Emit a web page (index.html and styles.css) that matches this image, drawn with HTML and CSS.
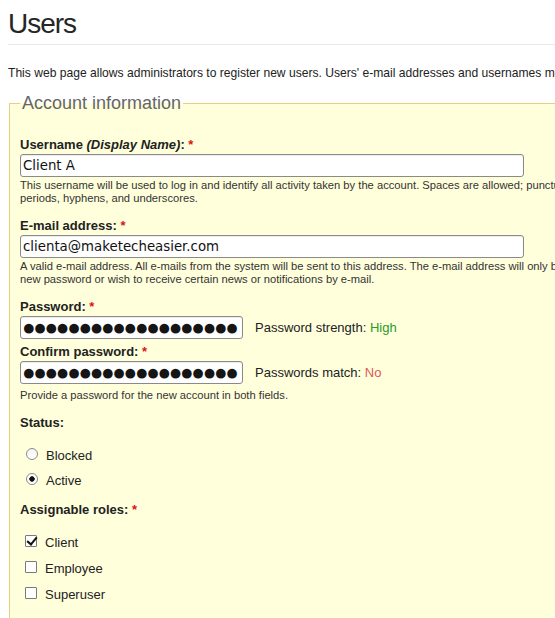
FILE: index.html
```html
<!DOCTYPE html>
<html lang="en">
<head>
<meta charset="utf-8">
<title>Users</title>
<link rel="stylesheet" href="styles.css">
</head>
<body>
<div class="page">
  <h1 class="title">Users</h1>
  <p class="intro">This web page allows administrators to register new users. Users' e-mail addresses and usernames must be unique.</p>
  <form class="form">
    <fieldset class="group">
      <legend class="legend">Account information</legend>

      <div class="item item-first">
        <label class="lbl" for="edit-name">Username <em>(Display Name)</em>: <span class="req">*</span></label>
        <input class="text wide" id="edit-name" type="text" value="Client A">
        <div class="desc">This username will be used to log in and identify all activity taken by the account. Spaces are allowed; punctuation is not allowed except for<br>periods, hyphens, and underscores.</div>
      </div>

      <div class="item">
        <label class="lbl" for="edit-mail">E-mail address: <span class="req">*</span></label>
        <input class="text wide" id="edit-mail" type="text" value="clienta@maketecheasier.com">
        <div class="desc">A valid e-mail address. All e-mails from the system will be sent to this address. The e-mail address will only be used if you wish to receive a<br>new password or wish to receive certain news or notifications by e-mail.</div>
      </div>

      <div class="item">
        <div class="pw-item">
          <label class="lbl" for="edit-pass1">Password: <span class="req">*</span></label>
          <div class="pw-row">
            <input class="text pw" id="edit-pass1" type="text" readonly value="●●●●●●●●●●●●●●●●●●●">
            <span class="pw-note">Password strength: <span class="ok">High</span></span>
          </div>
        </div>
        <div class="pw-item pw-confirm">
          <label class="lbl" for="edit-pass2">Confirm password: <span class="req">*</span></label>
          <div class="pw-row">
            <input class="text pw" id="edit-pass2" type="text" readonly value="●●●●●●●●●●●●●●●●●●●">
            <span class="pw-note">Passwords match: <span class="bad">No</span></span>
          </div>
        </div>
        <div class="desc desc-pw">Provide a password for the new account in both fields.</div>
      </div>

      <div class="item item-group">
        <div class="lbl">Status:</div>
        <div class="options radios">
          <label class="opt"><input class="radio" type="radio" name="status"> Blocked</label>
          <label class="opt"><input class="radio" type="radio" name="status" checked> Active</label>
        </div>
      </div>

      <div class="item item-group">
        <div class="lbl">Assignable roles: <span class="req">*</span></div>
        <div class="options checks">
          <label class="opt"><input class="check" type="checkbox" checked> Client</label>
          <label class="opt"><input class="check" type="checkbox"> Employee</label>
          <label class="opt"><input class="check" type="checkbox"> Superuser</label>
        </div>
      </div>

      <div class="item item-extra">
        <label class="opt opt-off"><input class="check" type="checkbox" checked disabled> authenticated user</label>
      </div>
    </fieldset>
  </form>
</div>
</body>
</html>
```

FILE: styles.css
```css
html {
  overflow: hidden;
}

body {
  margin: 0;
  background: #ffffff;
  color: #222222;
  font-family: "Liberation Sans", Arial, sans-serif;
}

.page {
  width: 1000px;
  padding: 0 8px;
}

.title {
  margin: 7px 0 0;
  padding-bottom: 3px;
  border-bottom: 1px solid #e8e8e8;
  font-size: 28px;
  line-height: 34px;
  font-weight: normal;
  letter-spacing: -1px;
  color: #262626;
}

.intro {
  margin: 21px 0 0;
  font-size: 12.1px;
  line-height: 15px;
  white-space: nowrap;
}

.form {
  margin: 0;
}

.group {
  margin: 11px 0 0 1px;
  padding: 9px 10px 30px;
  border: 1px solid #e7d07c;
  background: #ffffdc;
  min-width: 0;
}

.legend {
  padding: 0 2px;
  font-size: 18px;
  line-height: 22px;
  color: #666666;
}

.item {
  margin-top: 13px;
}

.item-first {
  margin-top: 14px;
}

.item-group {
  margin-top: 13px;
}

.lbl {
  display: block;
  margin-bottom: 1px;
  font-size: 13px;
  line-height: 16px;
  font-weight: bold;
  color: #222222;
}

.req {
  color: #e01010;
}

.text {
  display: block;
  box-sizing: border-box;
  height: 23px;
  margin: 0;
  padding: 0 2px;
  border: 1px solid #8a8a8a;
  border-radius: 3px;
  background: #ffffff;
  box-shadow: inset 0 1px 1px rgba(0, 0, 0, 0.08);
  font-family: "DejaVu Sans", sans-serif;
  font-size: 13.33px;
  color: #111111;
  outline: none;
}

.wide {
  width: 504px;
}

.desc {
  margin-top: 2px;
  font-size: 11.2px;
  line-height: 13px;
  color: #333333;
  white-space: nowrap;
}

.pw-confirm {
  margin-top: 5px;
}

.pw-row {
  display: flex;
  align-items: center;
}

.pw {
  width: 223px;
  padding-left: 1px;
  font-family: "Liberation Sans", "DejaVu Sans", sans-serif;
  font-size: 22.5px;
  letter-spacing: -2.3px;
  line-height: 21px;
  color: #151515;
}

.pw-note {
  margin-left: 12px;
  font-size: 13px;
  color: #222222;
}

.ok {
  color: #2a9a2a;
}

.bad {
  color: #e25757;
}

.desc-pw {
  margin-top: 5px;
}

.options {
  margin-top: 16px;
}

.opt {
  display: flex;
  align-items: center;
  height: 17px;
  margin-bottom: 8px;
  font-size: 13px;
  color: #222222;
}

.checks {
  margin-top: 15.5px;
}

.checks .opt {
  margin-bottom: 9px;
}

.item-extra {
  margin-top: 15px;
}

.radio {
  appearance: none;
  -webkit-appearance: none;
  box-sizing: border-box;
  width: 12px;
  height: 12px;
  margin: -3px 8px 0 6px;
  border: 1px solid #8a8a8a;
  border-radius: 50%;
  background: linear-gradient(#f4f4f4, #ffffff);
}

.radio:checked {
  background: radial-gradient(circle, #111111 0, #111111 2.4px, #ffffff 3px);
}

.check {
  appearance: none;
  -webkit-appearance: none;
  position: relative;
  box-sizing: border-box;
  width: 12px;
  height: 12px;
  margin: -2px 8px 0 5px;
  border: 1px solid #7a7a7a;
  border-radius: 1px;
  background: #ffffff;
}

.check:checked::after {
  content: "";
  position: absolute;
  left: 3px;
  top: -1px;
  width: 4px;
  height: 8px;
  border-right: 2px solid #111111;
  border-bottom: 2px solid #111111;
  transform: rotate(40deg);
}

.check:disabled {
  border-color: #d8d8d8;
  background: #eeeeea;
}

.check:disabled::after {
  border-color: #bbbbbb;
}

.opt-off {
  color: #999999;
}
```
